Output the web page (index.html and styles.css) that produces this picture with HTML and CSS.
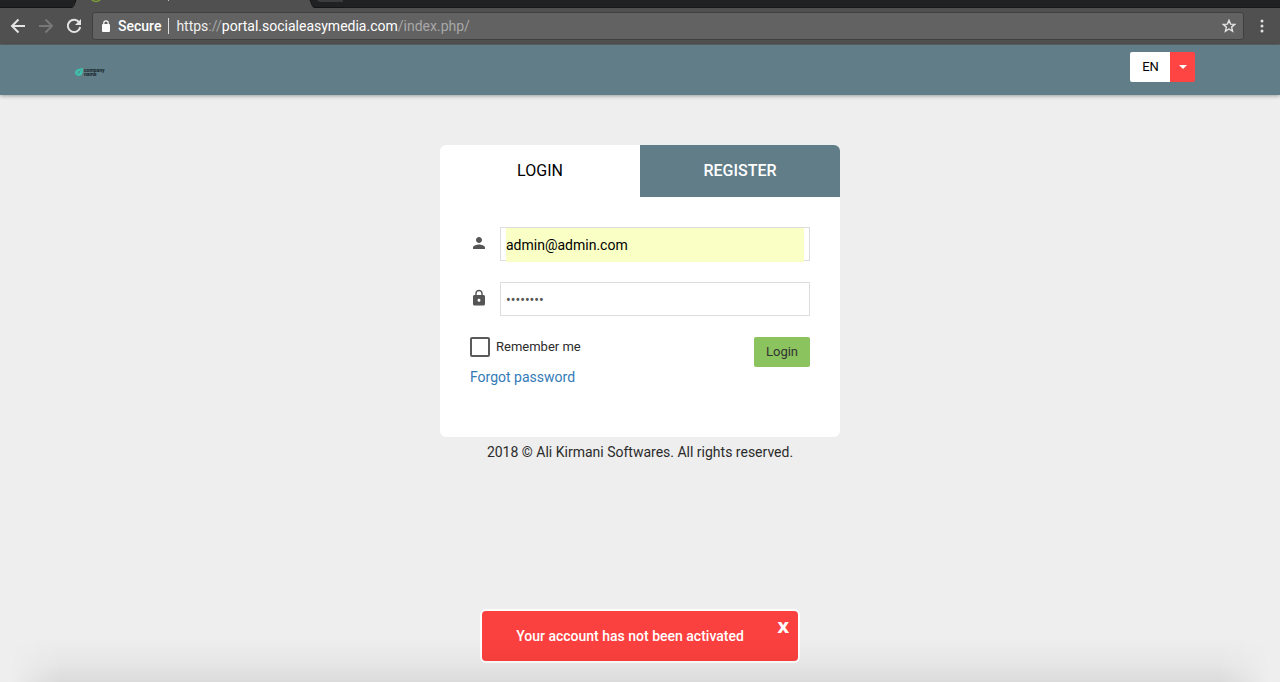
FILE: index.html
```html
<!DOCTYPE html>
<html lang="en">
<head>
<meta charset="utf-8">
<title>Login</title>
<link rel="stylesheet" href="styles.css">
</head>
<body>
<div class="browser">
  <div class="tabstrip">
    <svg class="tab-shape" width="345" height="8" viewBox="0 0 345 8" aria-hidden="true">
      <path d="M76 0H310L314 8H72Z" fill="#505050"/>
      <path d="M0 7.5H71Q73 7.5 74 5.500L76 0M310 0L312.500 6Q313 7.500 315 7.500H345" fill="none" stroke="#141414"/>
      <circle cx="96" cy="-4" r="5.500" fill="none" stroke="#7d9a35" stroke-width="1.500"/>
      <path d="M168.500 0V1" stroke="#bbb"/>
      <path d="M317 0H343V1Q343 2 342 2H320Q318 2 317 0Z" fill="#3c3c3c"/>
    </svg>
  </div>
  <div class="toolbar">
    <button class="tool" type="button" aria-label="Back"><svg width="16" height="16" viewBox="0 0 16 16"><path d="M15 8H2M8.500 1.500L2 8L8.500 14.500" fill="none" stroke="#e4e4e4" stroke-width="2"/></svg></button>
    <button class="tool" type="button" aria-label="Forward" disabled><svg width="16" height="16" viewBox="0 0 16 16"><path d="M1 8H14M7.500 1.500L14 8L7.500 14.500" fill="none" stroke="#787878" stroke-width="2"/></svg></button>
    <button class="tool" type="button" aria-label="Reload"><svg width="16" height="16" viewBox="0 0 16 16"><path d="M13.300 4.500A6.200 6.200 0 1 0 14.200 9" fill="none" stroke="#e4e4e4" stroke-width="2"/><path d="M15 1V7H9Z" fill="#e4e4e4"/></svg></button>
    <div class="address">
      <svg width="8" height="12" viewBox="0 0 8 12" aria-hidden="true"><rect y="4" width="8" height="8" rx="1" fill="#fff"/><path d="M1.800 5V3A2.200 2.200 0 0 1 6.200 3V5" fill="none" stroke="#fff" stroke-width="1.200"/></svg>
      <span class="secure">Secure</span>
      <span class="url"><span class="dim">https</span><span class="faint">://</span>portal.socialeasymedia.com<span class="faint">/index.php/</span></span>
      <svg class="star" width="14" height="14" viewBox="0 0 14 14" aria-hidden="true"><path d="M7 1.300L8.600 5.100L12.700 5.400L9.600 8.100L10.600 12.200L7 10L3.400 12.200L4.400 8.100L1.300 5.400L5.400 5.100Z" fill="none" stroke="#e4e4e4" stroke-width="1.400"/></svg>
    </div>
    <button class="tool menu" type="button" aria-label="Menu"><svg width="4" height="14" viewBox="0 0 4 14"><g fill="#e0e0e0"><circle cx="2" cy="2" r="1.500"/><circle cx="2" cy="7" r="1.500"/><circle cx="2" cy="12" r="1.500"/></g></svg></button>
  </div>
</div>

<header class="header">
  <div class="header-inner">
    <a class="logo" href="#">
      <svg width="8" height="8" viewBox="0 0 8 8" aria-hidden="true"><path d="M8 0L7.600 4.500Q6.500 8 3.500 8Q0 7.500 0 4.500Q.5 1.500 4 .7Z" fill="#3fc0ac"/><path d="M2 6L6 2M3 3L5 5" stroke="#607d88" stroke-width=".7"/></svg>
      <span class="logo-name">company<br>name</span>
    </a>
    <div class="language">
      <button class="lang-current" type="button">EN</button>
      <button class="lang-toggle" type="button" aria-label="Choose language"><span class="caret"></span></button>
    </div>
  </div>
</header>

<main class="main">
  <section class="card">
    <nav class="tabs">
      <a class="tab" href="#login">LOGIN</a>
      <a class="tab tab-alt" href="#register">REGISTER</a>
    </nav>
    <form class="form" id="login">
      <div class="field">
        <label class="field-icon" for="email" aria-label="Email"><svg width="18" height="18" viewBox="0 0 24 24"><path d="M12 12c2.200 0 4-1.800 4-4s-1.800-4-4-4-4 1.800-4 4 1.800 4 4 4zm0 2c-2.700 0-8 1.300-8 4v2h16v-2c0-2.700-5.300-4-8-4z" fill="#555"/></svg></label>
        <div class="box"><input class="input autofilled" id="email" type="email" value="admin@admin.com"></div>
      </div>
      <div class="field">
        <label class="field-icon" for="password" aria-label="Password"><svg width="18" height="18" viewBox="0 0 24 24"><path d="M18 8h-1V6c0-2.800-2.200-5-5-5S7 3.200 7 6v2H6c-1.100 0-2 .9-2 2v10c0 1.100.9 2 2 2h12c1.100 0 2-.9 2-2V10c0-1.100-.9-2-2-2zm-6 9c-1.100 0-2-.9-2-2s.9-2 2-2 2 .9 2 2-.9 2-2 2zm3.100-9H8.900V6a3.100 3.100 0 0 1 6.200 0z" fill="#555"/></svg></label>
        <div class="box"><input class="input" id="password" type="password" value="password"></div>
      </div>
      <div class="actions">
        <div class="options">
          <label class="remember"><input class="check" type="checkbox">Remember me</label>
          <a class="forgot" href="#forgot">Forgot password</a>
        </div>
        <button class="submit" type="button">Login</button>
      </div>
    </form>
  </section>
  <footer class="footer">2018 © Ali Kirmani Softwares. All rights reserved.</footer>
</main>

<div class="toast" role="alert">
  <span class="toast-text">Your account has not been activated</span>
  <button class="toast-close" type="button" aria-label="Close">X</button>
</div>
<div class="edge-shade"></div>
</body>
</html>
```
FILE: styles.css
```css
* { box-sizing: border-box; }
body {
  margin: 0;
  min-height: 100vh;
  background: #eee;
  color: #2b2b2b;
  font: 14px/20px Roboto, sans-serif;
  overflow: hidden;
}
button, input { font: inherit; margin: 0; }
button { border: 0; padding: 0; }
a { text-decoration: none; }
svg { display: block; flex: none; }

.tabstrip { height: 8px; background: #202123; border-bottom: 1px solid #181818; }
.toolbar {
  display: flex;
  align-items: center;
  height: 37px;
  padding: 0 12px 0 10px;
  gap: 12px;
  background: #505050;
  border-bottom: 1px solid #606467;
}
.tool { background: none; }
.address {
  flex: 1;
  display: flex;
  align-items: center;
  height: 28px;
  margin-left: -2px;
  padding: 0 7px 0 9px;
  background: #626262;
  border: 1px solid #404040;
  border-radius: 3px;
  color: #fff;
  font-size: 14px;
}
.secure { margin-left: 8px; padding-right: 7px; border-right: 1px solid #ddd; line-height: 16px; font-weight: 500; }
.url { flex: 1; margin-left: 7px; }
.dim { color: #eee; }
.faint { color: #a8a8a8; }
.menu { width: 12px; display: grid; place-items: center; }

.header { position: relative; height: 50px; background: #607d88; box-shadow: 0 1px 4px rgba(0, 0, 0, .35); }
.header-inner {
  display: flex;
  justify-content: space-between;
  align-items: flex-start;
  max-width: 1170px;
  margin: 0 auto;
  padding: 7px 30px 0 20px;
}
.logo { display: flex; gap: 1px; margin-top: 16px; align-items: center; color: #17262b; }
.logo-name { font-size: 5px; line-height: 4px; font-weight: 700; }
.language { display: flex; height: 30px; }
.lang-current { width: 40px; padding-left: 1px; background: #fff; color: #000; font-size: 13px; border-radius: 2px 0 0 2px; }
.lang-toggle { width: 25px; display: grid; place-items: center; background: #ff4444; border-radius: 0 2px 2px 0; }
.caret { border: 4px solid transparent; border-top-color: #fff; border-bottom: 0; }

.main { padding: 50px 20px 0; }
.card { max-width: 400px; margin: 0 auto; background: #fff; border-radius: 6px; overflow: hidden; }
.tabs { display: flex; }
.tab { flex: 1; height: 52px; line-height: 51px; text-align: center; font-size: 16px; color: #000; }
.tab-alt { background: #607d88; color: #fff; font-weight: 500; }
.form { padding: 30px 30px 50px; }
.field { display: flex; gap: 12px; margin-bottom: 21px; }
.field-icon { padding-top: 7px; }
.box { flex: 1; height: 34px; padding: 0 5px; border: 1px solid #ddd; }
.input {
  display: block;
  width: 100%;
  height: 34px;
  padding: 0;
  border: 0;
  outline: 0;
  background: transparent;
  color: #555;
}
.autofilled { background: #faffc5; color: #000; }
.actions { display: flex; justify-content: space-between; align-items: flex-start; }
.options { display: flex; flex-direction: column; gap: 10px; }
.remember { display: flex; align-items: center; gap: 6px; font-size: 13px; }
.check { appearance: none; width: 20px; height: 20px; border: 2px solid #5a5a5a; border-radius: 2px; background: #fff; }
.forgot { color: #337ab7; }
.submit { width: 56px; height: 30px; background: #8bc35e; color: #333; border-radius: 2px; font-size: 13px; }
.footer { padding-top: 5px; text-align: center; }

.toast {
  position: fixed;
  bottom: 19px;
  left: 50%;
  transform: translateX(-50%);
  display: flex;
  justify-content: center;
  align-items: center;
  width: 320px;
  height: 54px;
  padding-right: 20px;
  background: #fb413f;
  border: 2px solid #fff;
  border-radius: 6px;
  color: #fff;
}
.toast-text { font-weight: 500; }
.toast-close { position: absolute; top: 6px; right: 9px; background: none; color: #fff; font-family: "Open Sans", sans-serif; font-size: 16px; font-weight: 800; }
.edge-shade {
  position: fixed;
  bottom: 0;
  left: 0;
  right: 0;
  height: 44px;
  background: linear-gradient(rgba(0, 0, 0, 0), rgba(0, 0, 0, .03) 60%, rgba(0, 0, 0, .08));
  -webkit-mask-image: linear-gradient(90deg, transparent 10px, #000 60px, #000 calc(100% - 60px), transparent calc(100% - 10px));
  mask-image: linear-gradient(90deg, transparent 10px, #000 60px, #000 calc(100% - 60px), transparent calc(100% - 10px));
  pointer-events: none;
}
```
